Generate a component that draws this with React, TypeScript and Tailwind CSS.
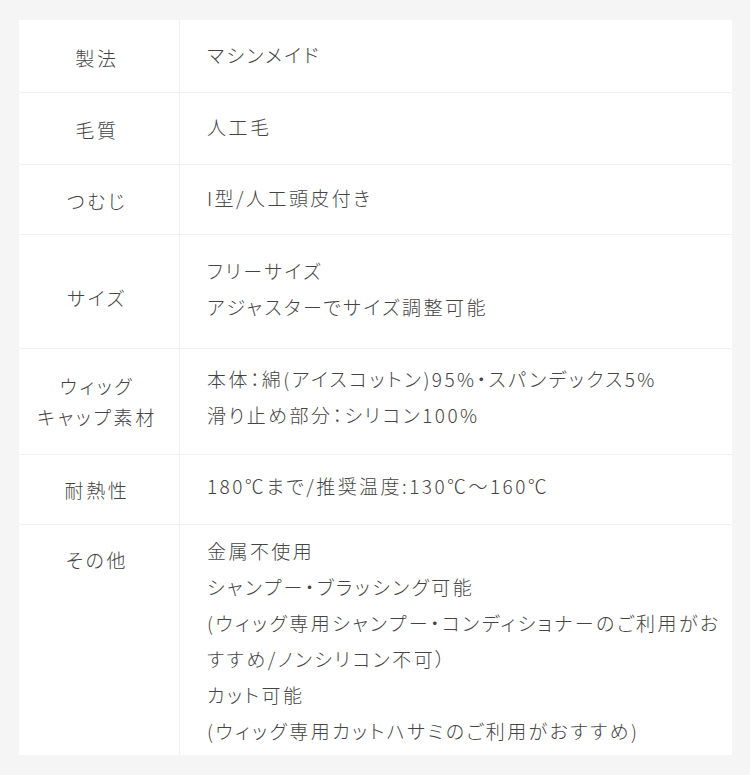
import React from "react";

type Row = {
  label: string[];
  value: string[];
  labelCls: string;
  valueCls: string;
};

const rows: Row[] = [
  { label: ["製法"], value: ["マシンメイド"], labelCls: "pt-[22px]", valueCls: "pt-[17px] pb-[19px]" },
  { label: ["毛質"], value: ["人工毛"], labelCls: "pt-[21px]", valueCls: "pt-[16px] pb-[19px]" },
  { label: ["つむじ"], value: ["I型/人工頭皮付き"], labelCls: "pt-[20px]", valueCls: "pt-[15px] pb-[18px]" },
  {
    label: ["サイズ"],
    value: ["フリーサイズ", "アジャスターでサイズ調整可能"],
    labelCls: "pt-[47px]",
    valueCls: "pt-[18px] pb-[23px]",
  },
  {
    label: ["ウィッグ", "キャップ素材"],
    value: ["本体：綿(アイスコットン)95%・スパンデックス5%", "滑り止め部分：シリコン100%"],
    labelCls: "pt-[21px]",
    valueCls: "pt-[12px] pb-[21px]",
  },
  { label: ["耐熱性"], value: ["180℃まで/推奨温度:130℃～160℃"], labelCls: "pt-[19px]", valueCls: "pt-[13px] pb-[20px]" },
  {
    label: ["その他"],
    value: [
      "金属不使用",
      "シャンプー・ブラッシング可能",
      "(ウィッグ専用シャンプー・コンディショナーのご利用がお",
      "すすめ/ノンシリコン不可）",
      "カット可能",
      "(ウィッグ専用カットハサミのご利用がおすすめ)",
    ],
    labelCls: "pt-[19px]",
    valueCls: "pt-[8px] pb-[6px]",
  },
];

export default function App() {
  return (
    <div
      className="min-h-[775px] w-[750px] bg-[#f5f5f5] pl-[19px] pr-[18px] pt-[20px] pb-[20px] text-[#444444] font-light [font-feature-settings:'palt']"
      style={{ fontFamily: '"Noto Sans CJK JP", "Noto Sans", sans-serif' }}
    >
      <div className="bg-white">
        {rows.map((r, i) => (
          <div
            key={i}
            className={
              "grid grid-cols-[161px_1fr] " + (i < rows.length - 1 ? "border-b border-[#f0f0f0]" : "")
            }
          >
            <div className={"border-r border-[#f0f0f0] pr-[4px] text-center text-[19px] leading-[31px] tracking-[0.14em] " + r.labelCls}>
              {r.label.map((l, j) => (
                <div key={j} className="whitespace-nowrap">{l}</div>
              ))}
            </div>
            <div className={"pl-[27px] pr-[8px] text-[19px] leading-[36px] tracking-[2.45px] " + r.valueCls}>
              {r.value.map((v, j) => (
                <div key={j} className="whitespace-nowrap">{v}</div>
              ))}
            </div>
          </div>
        ))}
      </div>
    </div>
  );
}
